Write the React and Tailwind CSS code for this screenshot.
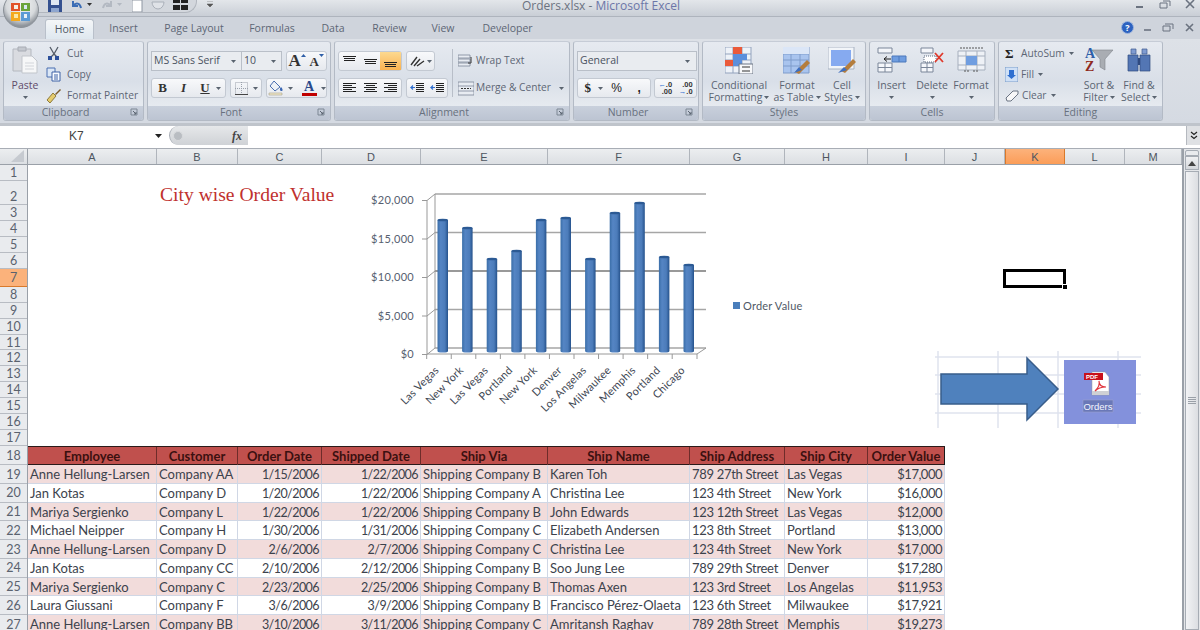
import React from "react";

const uiFont = "font-['Open_Sans','Noto_Sans',sans-serif]";

function Caret({ className = "" }) {
  return (
    <svg width="5" height="3" viewBox="0 0 5 3" className={`shrink-0 ${className}`}>
      <path d="M0 0h5L2.5 3z" fill="#5a6470" />
    </svg>
  );
}

function Launcher() {
  return (
    <svg width="9" height="9" viewBox="0 0 9 9" className="absolute right-[4px] top-[2px]">
      <path d="M1 1h6v6H1z" fill="none" stroke="#7d8794" />
      <path d="M3 3l3 3M6 4v2H4" fill="none" stroke="#5a6470" />
    </svg>
  );
}

function Group({ className, label, launcher, children }) {
  return (
    <div className={`${className} relative flex flex-col h-[80px] rounded-[3px] border border-[#b3bac5] border-t-[#c6ccd6] bg-gradient-to-b from-[#e6eaf0] via-[#d9dfe8] to-[#eef1f4] overflow-hidden`}>
      <div className="h-[65px] flex">{children}</div>
      <div className={`relative h-[14px] bg-gradient-to-b from-[#c9d0dc] to-[#bcc4d2] text-[10.5px] leading-[13px] text-center text-[#68717e] ${launcher ? "pr-[16px]" : ""}`}>
        {label}
        {launcher && <Launcher />}
      </div>
    </div>
  );
}

function BtnGroup({ className = "", children }) {
  return (
    <div className={`flex h-[20px] rounded-[3px] border border-[#c3c9d2] bg-gradient-to-b from-[#f8f9fb] to-[#e6e9ee] items-center ${className}`}>
      {children}
    </div>
  );
}

function Combo({ className, text }) {
  return (
    <div className={`flex h-[20px] items-center justify-between bg-[#e9ecf0] border border-[#b9bfc8] pl-[2px] pr-[5px] text-[10.5px] text-[#4a5260] ${className}`}>
      <span>{text}</span>
      <Caret />
    </div>
  );
}

function BigButton({ className, icon, line1, line2 }) {
  return (
    <div className={`flex flex-col items-center text-[10.5px] leading-[12px] text-[#5a6472] ${className}`}>
      <div className="h-[32px] mt-[2px] mb-[3px] flex items-center justify-center">{icon}</div>
      <span className="whitespace-nowrap">{line1}</span>
      <span className="whitespace-nowrap flex items-center gap-[2px] h-[12px]">
        {line2}
        <Caret />
      </span>
    </div>
  );
}

function Lines({ w = 13, rows }) {
  return (
    <svg width={w} height="12" viewBox="0 0 13 12">
      {rows.map((r, i) => (
        <path key={i} d={`M${r[0]} ${r[2]}H${r[1]}`} stroke="#222" strokeWidth="1" />
      ))}
    </svg>
  );
}

function Orb() {
  return (
    <svg width="38" height="34" viewBox="0 -4 38 34" className="absolute left-[1px] top-[-4px]">
      <defs>
        <radialGradient id="orb" cx="50%" cy="35%" r="60%">
          <stop offset="0" stopColor="#f7f8f8" />
          <stop offset="0.7" stopColor="#d6d9dc" />
          <stop offset="1" stopColor="#8f959c" />
        </radialGradient>
      </defs>
      <circle cx="20" cy="10" r="17.5" fill="url(#orb)" stroke="#8a9097" />
      <path d="M10 3h9v8h-9z" fill="#e2542a" />
      <path d="M13 5h4v4h-4z" fill="#f6f1e4" />
      <path d="M20 3h9v8h-9z" fill="#6ba53a" />
      <path d="M23 5h3v4h-3z" fill="#d7e9f3" />
      <path d="M10 12h9v9h-9z" fill="#f4a91f" />
      <path d="M13 14h4v4h-4z" fill="#fbe7a6" />
      <path d="M20 12h9v9h-9z" fill="#5b9bd5" />
      <path d="M23 14h3v4h-3z" fill="#e9f1f6" />
    </svg>
  );
}

function TitleBar() {
  return (
    <div className="relative h-[17px] flex items-start bg-gradient-to-b from-[#e3e6ea] to-[#c9ced6] border-b border-[#aeb4bd] overflow-hidden">
      <div className="flex items-center ml-[30px] pl-[18px] w-[167px] h-[13px] rounded-br-[12px] border-b border-r border-[#b1b6be] bg-[#d3d7dd] overflow-hidden gap-[8px]">
        <svg width="14" height="12" viewBox="0 0 14 12" className="shrink-0">
          <path d="M0 0h14v12H0z" fill="#34508f" />
          <path d="M3 0h8v5H3z" fill="#dfe7f2" />
          <path d="M3 8h8v4H3z" fill="#8ea6cf" />
        </svg>
        <svg width="22" height="12" viewBox="0 0 22 12" className="shrink-0">
          <path d="M3 1v5h5M3 6c3-4 7-3 8 2" fill="none" stroke="#3a6cb5" strokeWidth="2" />
          <path d="M17 3h5l-2.5 3z" fill="#333" />
        </svg>
        <svg width="22" height="12" viewBox="0 0 22 12" className="shrink-0">
          <path d="M11 1v5H6M11 6C8 2 4 3 3 8" fill="none" stroke="#b3b9c2" strokeWidth="2" />
          <path d="M17 3h5l-2.5 3z" fill="#b3b9c2" />
        </svg>
        <svg width="11" height="12" viewBox="0 0 11 12" className="shrink-0 ml-[2px]">
          <path d="M0 0h10v12H0z" fill="#fff" stroke="#8e96a2" />
        </svg>
        <svg width="14" height="12" viewBox="0 0 14 12" className="shrink-0">
          <path d="M1 2a6 7 0 0 0 12 0z" fill="#dfe2e7" stroke="#aab0b9" />
        </svg>
        <svg width="15" height="12" viewBox="0 0 15 12" className="shrink-0">
          <path d="M0 0h7v3H0zM8 0h7v3H8zM0 5h7v5H0zM8 5h7v5H8z" fill="#222" />
        </svg>
      </div>
      <svg width="6" height="6" viewBox="0 0 6 6" className="ml-[10px] mt-[1px]">
        <path d="M0 0h6M0 3h6L3 6z" fill="#555" stroke="#555" strokeWidth="0.5" />
      </svg>
      <div className="absolute left-[522px] top-0 text-[12px] leading-[11px] whitespace-nowrap">
        <span className="text-[#6b7280]">Orders.xlsx - </span>
        <span className="text-[#6c76a8]">Microsoft Excel</span>
      </div>
      <div className="absolute right-[4px] top-0 flex items-center gap-[13px] text-[#6b7380]">
        <svg width="12" height="10" viewBox="0 0 12 10"><path d="M2 7h7" stroke="#6b7380" strokeWidth="2" /></svg>
        <svg width="12" height="10" viewBox="0 0 12 10"><path d="M1 3h7v5H1zM4 1h7v5" fill="none" stroke="#6b7380" /></svg>
        <svg width="12" height="10" viewBox="0 0 12 10"><path d="M2 0l8 8M10 0L2 8" stroke="#6b7380" strokeWidth="1.6" /></svg>
      </div>
    </div>
  );
}

function Tabs() {
  const tabs = [
    ["Insert", "w-[55px]"],
    ["Page Layout", "w-[86px]"],
    ["Formulas", "w-[70px]"],
    ["Data", "w-[52px]"],
    ["Review", "w-[61px]"],
    ["View", "w-[46px]"],
    ["Developer", "w-[83px]"],
  ];
  return (
    <div className="flex h-[22px] bg-[#cfd4dc] text-[10.5px] text-[#5d6675] items-start">
      <div className="mt-[2px] ml-[45px] mr-[2px] w-[49px] h-[20px] rounded-t-[3px] border border-b-0 border-[#b9c0ca] bg-gradient-to-b from-[#f4f6f8] to-[#dfe8ef] text-center leading-[19px] text-[#4f5866]">
        Home
      </div>
      {tabs.map(([t, w]) => (
        <div key={t} className={`${w} h-[22px] text-center leading-[23px]`}>{t}</div>
      ))}
      <div className="ml-auto mr-[4px] flex items-center gap-[8px] h-[21px]">
        <div className="w-[13px] h-[13px] rounded-full bg-[#2d62c0] border border-[#9fb6dd] text-white text-[9px] font-bold leading-[12px] text-center">?</div>
        <svg width="12" height="10" viewBox="0 0 12 10"><path d="M2 7h7" stroke="#6b7380" strokeWidth="1.6" /></svg>
        <svg width="12" height="10" viewBox="0 0 12 10"><path d="M1 3h7v5H1zM3 1h8v5" fill="none" stroke="#6b7380" /></svg>
        <svg width="12" height="10" viewBox="0 0 12 10" className="ml-[2px]"><path d="M2 1l7 7M9 1L2 8" stroke="#6b7380" strokeWidth="1.6" /></svg>
      </div>
    </div>
  );
}

function Clipboard() {
  return (
    <Group className="w-[141px]" label="Clipboard" launcher>
      <div className="w-[42px] flex flex-col items-center pt-[4px] text-[10.5px] text-[#5f4b6a] leading-[12px]">
        <svg width="26" height="28" viewBox="0 0 26 28">
          <path d="M1 3h18v22H1z" fill="#d9dbe0" stroke="#b4b8bf" />
          <path d="M6 1h8v4H6z" fill="#c4c8cf" stroke="#a8acb4" />
          <path d="M10 10h10l5 5v12H10z" fill="#f6f7f8" stroke="#c1c5cb" />
          <path d="M13 17h9M13 20h9M13 23h9" stroke="#d2d5da" />
        </svg>
        <span className="mt-[5px]">Paste</span>
        <Caret className="mt-[5px]" />
      </div>
      <div className="flex flex-col pt-[1px] text-[10.2px] leading-[21px] text-[#5d6675]">
        {[
          ["Cut", <path key="c" d="M4 1l4 7 4-7M8 8l-3 3M8 8l3 3" fill="none" stroke="#555c68" strokeWidth="1.3" />, <path key="d" d="M2 10h4v4H2zM9 10h4v4H9z" fill="#2c4f9a" />],
          ["Copy", <path key="c" d="M1 1h8v9H1z" fill="#dbe7f6" stroke="#4b6fb0" />, <path key="d" d="M6 5h8v9H6zM8 8h4M8 10h4M8 12h4" fill="#f8fbff" stroke="#3e62a6" />],
          ["Format Painter", <path key="c" d="M9 6l5-5 1 1-5 5z" fill="#7a5a2b" />, <path key="d" d="M1 12l6-7 3 3-6 7z" fill="#e5cb6d" stroke="#8d7a3c" />],
        ].map(([t, a, b]) => (
          <div key={t} className="flex items-center gap-[5px] h-[21px]">
            <svg width="16" height="16" viewBox="0 0 16 16">{a}{b}</svg>
            <span>{t}</span>
          </div>
        ))}
      </div>
    </Group>
  );
}

function FontGroup() {
  return (
    <Group className="w-[184px]" label="Font" launcher>
      <div className="flex flex-col gap-[7px] pt-[9px] pl-[3px] text-[#333]">
        <div className="flex">
          <Combo className="w-[91px]" text="MS Sans Serif" />
          <Combo className="w-[40px] border-l-0" text="10" />
          <BtnGroup className="ml-[4px] w-[41px] font-['Liberation_Serif',serif] font-bold">
            <span className="w-[21px] flex items-start justify-center">
              <span className="text-[17px] leading-[18px]">A</span>
              <svg width="5" height="3" viewBox="0 0 5 3" className="mt-[2px]"><path d="M0 3h5L2.5 0z" fill="#2f5fa8" /></svg>
            </span>
            <span className="w-[19px] flex items-start justify-center">
              <span className="text-[13px] leading-[19px]">A</span>
              <svg width="5" height="3" viewBox="0 0 5 3" className="mt-[2px]"><path d="M0 0h5L2.5 3z" fill="#2f5fa8" /></svg>
            </span>
          </BtnGroup>
        </div>
        <div className="flex">
          <BtnGroup className="w-[75px] font-['Liberation_Serif',serif] text-[13px]">
            <span className="w-[21px] text-center font-bold">B</span>
            <span className="w-[21px] text-center italic font-bold">I</span>
            <span className="w-[22px] text-center font-bold underline">U</span>
            <Caret />
          </BtnGroup>
          <BtnGroup className="ml-[4px] w-[32px] justify-center gap-[5px]">
            <svg width="13" height="13" viewBox="0 0 13 13">
              <path d="M.5.5h12v12H.5zM6.5 0v13M0 6.5h13" fill="none" stroke="#9aa1ab" strokeDasharray="1 1" />
              <path d="M0 12.5h13" stroke="#444" />
            </svg>
            <Caret />
          </BtnGroup>
          <BtnGroup className="ml-[4px] w-[61px] justify-center gap-[4px]">
            <svg width="16" height="16" viewBox="0 0 16 16">
              <path d="M6 1l6 6-5 4-5-5z" fill="#eef2f7" stroke="#4b6fb0" />
              <path d="M13 7c2 2 2 4 .5 4S11 9 13 7z" fill="#3c68b4" />
              <path d="M1 13h13v2H1z" fill="#f1e9c9" stroke="#a9a28a" strokeWidth=".6" />
            </svg>
            <Caret />
            <span className="flex flex-col items-center w-[15px] ml-[5px] font-['Liberation_Serif',serif] font-bold text-[14px] leading-[12px] text-[#2a4a8c]">
              A<span className="w-[15px] h-[3px] bg-[#c00000]" />
            </span>
            <Caret />
          </BtnGroup>
        </div>
      </div>
    </Group>
  );
}

function AlignGroup() {
  const bar = "w-[21px] flex justify-center items-center h-[18px]";
  return (
    <Group className="w-[236px]" label="Alignment" launcher>
      <div className="flex flex-col gap-[7px] pt-[9px] pl-[3px]">
        <div className="flex">
          <BtnGroup className="w-[64px]">
            <span className={bar}><Lines rows={[[0, 13, 1.5], [1, 12, 3.5], [1, 12, 5.5]]} /></span>
            <span className={bar}><Lines rows={[[0, 13, 4.5], [1, 12, 6.5], [1, 12, 8.5]]} /></span>
            <span className={`${bar} bg-gradient-to-b from-[#fcd990] to-[#f9b24f]`}><Lines rows={[[0, 13, 7.5], [1, 12, 9.5], [1, 12, 11.5]]} /></span>
          </BtnGroup>
          <BtnGroup className="ml-[4px] w-[29px] justify-center gap-[2px]">
            <svg width="15" height="12" viewBox="0 0 15 12"><path d="M1 10L7 2M4 11l6-7M7 11l7-5" stroke="#333" strokeWidth="1.4" /></svg>
            <Caret />
          </BtnGroup>
        </div>
        <div className="flex">
          <BtnGroup className="w-[64px]">
            <span className={bar}><Lines rows={[[0, 13, 1.5], [0, 9, 3.5], [0, 13, 5.5], [0, 9, 7.5], [0, 13, 9.5]]} /></span>
            <span className={bar}><Lines rows={[[0, 13, 1.5], [2, 11, 3.5], [0, 13, 5.5], [2, 11, 7.5], [0, 13, 9.5]]} /></span>
            <span className={bar}><Lines rows={[[0, 13, 1.5], [4, 13, 3.5], [0, 13, 5.5], [4, 13, 7.5], [0, 13, 9.5]]} /></span>
          </BtnGroup>
          <BtnGroup className="ml-[4px] w-[42px]">
            {[0, 1].map((i) => (
              <span key={i} className="w-[20px] flex justify-center">
                <svg width="15" height="12" viewBox="0 0 15 12">
                  <path d="M6 1.5h8M6 3.5h8M6 5.5h8M6 7.5h8M6 9.5h8" stroke="#222" />
                  <path d="M5 5.5H1l2-2M1 5.5l2 2" fill="none" stroke="#2f6fd0" strokeWidth="1.2" />
                </svg>
              </span>
            ))}
          </BtnGroup>
        </div>
      </div>
      <div className="w-px h-[48px] mt-[7px] ml-[4px] bg-[#b8bec8]" />
      <div className="flex flex-col gap-[7px] pt-[9px] pl-[5px] text-[10.2px] text-[#5d6675]">
        <div className="flex items-center gap-[2px] h-[20px]">
          <svg width="16" height="15" viewBox="0 0 16 15">
            <path d="M0 1h12v3H0zM0 5h12v3H0zM0 9h12v3H0z" fill="#e8ecf2" stroke="#7b8698" strokeWidth=".8" />
            <path d="M13 3v6h-3" fill="none" stroke="#333" />
          </svg>
          <span>Wrap Text</span>
        </div>
        <div className="flex items-center gap-[2px] h-[20px]">
          <svg width="16" height="15" viewBox="0 0 16 15">
            <path d="M0 1h16v13H0z" fill="#e8ecf2" stroke="#7b8698" strokeWidth=".8" />
            <path d="M0 5h16M0 10h16" stroke="#7b8698" strokeWidth=".8" />
            <path d="M3 7.5h10" stroke="#333" strokeDasharray="2 1" />
          </svg>
          <span>Merge &amp; Center</span>
          <Caret className="ml-[6px]" />
        </div>
      </div>
    </Group>
  );
}

function NumberGroup() {
  return (
    <Group className="w-[126px]" label="Number" launcher>
      <div className="flex flex-col gap-[7px] pt-[9px] pl-[3px]">
        <Combo className="w-[120px] pr-[6px]" text="General" />
        <div className="flex">
          <BtnGroup className="w-[74px] text-[#222] font-['Liberation_Sans',sans-serif]">
            <span className="w-[20px] text-center font-['Liberation_Serif',serif] font-bold text-[13px]">$</span>
            <Caret />
            <span className="w-[24px] ml-[2px] text-center text-[12px]">%</span>
            <span className="w-[22px] text-center font-bold text-[12px]">,</span>
          </BtnGroup>
          <BtnGroup className="ml-[3px] w-[43px] justify-around text-[7.5px] leading-[7px] font-bold font-['Liberation_Sans',sans-serif] text-[#333]">
            <span className="flex flex-col items-end"><span><span className="text-[#2f6fd0]">←</span>.0</span><span>.00</span></span>
            <span className="flex flex-col items-end"><span>.00</span><span><span className="text-[#2f6fd0]">→</span>.0</span></span>
          </BtnGroup>
        </div>
      </div>
    </Group>
  );
}

function StyleIcon({ kind }) {
  const grid = "M0 0h26v26H0z M0 7h26 M0 13h26 M0 19h26 M8 0v26 M17 0v26";
  if (kind === "cond") {
    return (
      <svg width="28" height="27" viewBox="0 0 28 27">
        <path d={grid} fill="#eef2f8" stroke="#93a3bd" />
        <path d="M8 0h9v7H8zM0 13h8v6H0zM8 7h9v6H8z" fill="#ea5a3a" />
        <path d="M8 7h14v6H8zM8 13h9v6H8z" fill="#5b8fdc" />
        <path d="M14 17h14v10H14z" fill="#f7f8fa" stroke="#6c7686" />
        <path d="M17 20h8M17 24h8" stroke="#333" />
      </svg>
    );
  }
  if (kind === "table") {
    return (
      <svg width="28" height="27" viewBox="0 0 28 27">
        <path d={grid} fill="#a9c4ee" stroke="#7f9ccb" />
        <path d="M0 0h26v7H0z" fill="#dbe6f7" />
        <path d="M12 25l12-12 3 3-11 11z" fill="#b47d3d" />
        <path d="M11 26l5-6 3 3z" fill="#3e6fc0" />
      </svg>
    );
  }
  return (
    <svg width="28" height="27" viewBox="0 0 28 27">
      <path d="M0 0h26v22H0z" fill="#f2f5f9" stroke="#a8b2c2" />
      <path d="M3 3h20v16H3z" fill="#86aaf0" />
      <path d="M13 24l12-12 3 3-11 11z" fill="#b47d3d" />
      <path d="M10 26l6-6 3 3z" fill="#3e6fc0" />
    </svg>
  );
}

function StylesGroup() {
  return (
    <Group className="w-[164px]" label="Styles">
      <BigButton className="w-[72px]" icon={<StyleIcon kind="cond" />} line1="Conditional" line2="Formatting" />
      <BigButton className="w-[44px]" icon={<StyleIcon kind="table" />} line1="Format" line2="as Table" />
      <BigButton className="w-[46px]" icon={<StyleIcon kind="cell" />} line1="Cell" line2="Styles" />
    </Group>
  );
}

function CellBtn({ className, icon, label }) {
  return (
    <div className={`flex flex-col items-center text-[10.5px] leading-[12px] text-[#5a6472] ${className}`}>
      <div className="h-[32px] mt-[2px] mb-[3px] flex items-center">{icon}</div>
      <span>{label}</span>
      <Caret className="mt-[5px]" />
    </div>
  );
}

function CellsGroup() {
  return (
    <Group className="w-[126px]" label="Cells">
      <CellBtn
        className="w-[43px]"
        label="Insert"
        icon={
          <svg width="30" height="26" viewBox="0 0 30 26">
            <path d="M1 1h14v5H1zM1 16h14v9H1zM1 20.5h14M8 16v9" fill="#f4f6fa" stroke="#7a8699" />
            <path d="M15 9h14v6H15zM22 9v6" fill="#6f9de0" stroke="#4d79bb" />
            <path d="M14 12H7l3-2.5M7 12l3 2.5" fill="none" stroke="#222" />
          </svg>
        }
      />
      <CellBtn
        className="w-[38px]"
        label="Delete"
        icon={
          <svg width="24" height="26" viewBox="0 0 24 26">
            <path d="M1 1h12v5H1zM1 16h12v9H1zM1 20.5h12M7 16v9" fill="#f4f6fa" stroke="#7a8699" />
            <path d="M4 9h12v6H4z" fill="#fff" stroke="#5c6a80" strokeDasharray="1 1" />
            <path d="M15 6l8 9M23 6l-8 9" stroke="#e0392b" strokeWidth="1.8" />
          </svg>
        }
      />
      <CellBtn
        className="w-[40px]"
        label="Format"
        icon={
          <svg width="29" height="27" viewBox="0 0 29 27">
            <path d="M1 4h27v19H1zM9 4v19M20 4v19M1 9h27M1 18h27" fill="#eef1f6" stroke="#a6afbd" />
            <path d="M9 9h11v9H9z" fill="#6f9de0" />
            <path d="M3 1h23M7 24h6M16 24h6" stroke="#555" strokeDasharray="2 1" />
          </svg>
        }
      />
    </Group>
  );
}

function EditingGroup() {
  return (
    <Group className="w-[165px]" label="Editing">
      <div className="flex flex-col pt-[1px] pl-[6px] w-[81px] text-[10.2px] leading-[21px] text-[#5d6675]">
        <div className="flex items-center h-[21px] whitespace-nowrap">
          <span className="w-[16px] font-['Liberation_Serif',serif] font-bold text-[13px] text-[#222]">Σ</span>
          <span>AutoSum</span>
          <Caret className="ml-[4px]" />
        </div>
        <div className="flex items-center h-[21px]">
          <svg width="13" height="15" viewBox="0 0 13 15" className="mr-[3px]">
            <path d="M0 0h13v15H0z" fill="#cfe0f6" stroke="#7a9cc8" />
            <path d="M4 3h5v5h2l-4.5 4L2 8h2z" fill="#2f6fd0" />
          </svg>
          <span>Fill</span>
          <Caret className="ml-[4px]" />
        </div>
        <div className="flex items-center h-[21px]">
          <svg width="14" height="12" viewBox="0 0 14 12" className="mr-[3px]">
            <path d="M1 8l7-7h5v3l-7 7H2z" fill="#f7f7f8" stroke="#6b7483" />
          </svg>
          <span>Clear</span>
          <Caret className="ml-[4px]" />
        </div>
      </div>
      <BigButton
        className="w-[38px]"
        icon={
          <svg width="30" height="28" viewBox="0 0 30 28">
            <path d="M8 4h21l-8 9v11l-5-3v-8z" fill="#a9adb3" stroke="#7f848b" strokeWidth=".6" />
            <text x="1" y="12" fontFamily="Liberation Serif" fontWeight="700" fontSize="14" fill="#2f5fa8">A</text>
            <text x="1" y="25" fontFamily="Liberation Serif" fontWeight="700" fontSize="14" fill="#8f2a20">Z</text>
          </svg>
        }
        line1="Sort &"
        line2="Filter"
      />
      <BigButton
        className="w-[40px] ml-[1px]"
        icon={
          <svg width="26" height="24" viewBox="0 0 26 24">
            <path d="M5 1h5v5H5zM16 1h5v5h-5z" fill="#7f9bd0" stroke="#3f5a90" strokeWidth=".7" />
            <path d="M2 7h10v16H2zM14 7h10v16H14z" fill="#5376b4" stroke="#2f4a80" strokeWidth=".7" />
            <path d="M12 10h2v7h-2z" fill="#2f4a80" />
          </svg>
        }
        line1="Find &"
        line2="Select"
      />
    </Group>
  );
}

function Ribbon() {
  return (
    <div className={`h-[87px] flex gap-[3px] pl-[3px] pt-[2px] bg-gradient-to-b from-[#dde1e7] to-[#d5dae2] border-b-[3px] border-[#bfc4cb] ${uiFont}`}>
      <Clipboard />
      <FontGroup />
      <AlignGroup />
      <NumberGroup />
      <StylesGroup />
      <CellsGroup />
      <EditingGroup />
    </div>
  );
}

function FormulaBar() {
  return (
    <div className="h-[23px] flex bg-white border-b border-[#a8adb5] font-['Liberation_Sans',sans-serif] pb-[3px]">
      <div className="w-[169px] flex items-center relative text-[12px] text-[#444]">
        <span className="ml-[69px]">K7</span>
        <svg width="7" height="4" viewBox="0 0 7 4" className="ml-[71px]"><path d="M0 0h7L3.5 4z" fill="#222" /></svg>
      </div>
      <div className="w-[79px] flex items-center justify-between rounded-l-[10px] bg-gradient-to-b from-[#e6e8ea] to-[#cfd2d6] border-l border-[#a8adb5] pl-[3px] pr-[6px]">
        <span className="w-[10px] h-[10px] rounded-full bg-[#b9bdc2] border border-[#d8dadd]" />
        <span className="font-['Liberation_Serif',serif] italic font-bold text-[12px] text-[#444]">fx</span>
      </div>
      <div className="flex-1" />
      <div className="w-[14px] bg-[#dfe1e4] border-l border-[#b5b9bf] flex items-center justify-center">
        <svg width="8" height="9" viewBox="0 0 8 9"><path d="M1 1l3 2.5L7 1M1 5l3 2.5L7 5" fill="none" stroke="#222" strokeWidth="1.2" /></svg>
      </div>
    </div>
  );
}

const columns = [
  ["A", "w-[129px]"],
  ["B", "w-[81px]"],
  ["C", "w-[84px]"],
  ["D", "w-[99px]"],
  ["E", "w-[127px]"],
  ["F", "w-[142px]"],
  ["G", "w-[95px]"],
  ["H", "w-[83px]"],
  ["I", "w-[77px]"],
  ["J", "w-[60px]"],
  ["K", "w-[60px]"],
  ["L", "w-[60px]"],
  ["M", "w-[57px]"],
];

const rowHeights = [
  "h-[16px]", "h-[24px] pt-[8px]", "h-[16px]", "h-[16px]", "h-[16px]", "h-[16px]", "h-[18px]", "h-[16px]", "h-[16px]",
  "h-[16px]", "h-[15px]", "h-[16px]", "h-[16px]", "h-[16px]", "h-[16px]", "h-[16px]", "h-[16px]", "h-[19px]",
  "h-[18.75px]", "h-[18.75px]", "h-[18.75px]", "h-[18.75px]", "h-[18.75px]", "h-[18.75px]", "h-[18.75px]", "h-[18.75px]", "h-[18.75px]",
];

const headers = ["Employee", "Customer", "Order Date", "Shipped Date", "Ship Via", "Ship Name", "Ship Address", "Ship City", "Order Value"];

const orders = [
  ["Anne Hellung-Larsen", "Company AA", "1/15/2006", "1/22/2006", "Shipping Company B", "Karen Toh", "789 27th Street", "Las Vegas", "$17,000"],
  ["Jan Kotas", "Company D", "1/20/2006", "1/22/2006", "Shipping Company A", "Christina Lee", "123 4th Street", "New York", "$16,000"],
  ["Mariya Sergienko", "Company L", "1/22/2006", "1/22/2006", "Shipping Company B", "John Edwards", "123 12th Street", "Las Vegas", "$12,000"],
  ["Michael Neipper", "Company H", "1/30/2006", "1/31/2006", "Shipping Company C", "Elizabeth Andersen", "123 8th Street", "Portland", "$13,000"],
  ["Anne Hellung-Larsen", "Company D", "2/6/2006", "2/7/2006", "Shipping Company C", "Christina Lee", "123 4th Street", "New York", "$17,000"],
  ["Jan Kotas", "Company CC", "2/10/2006", "2/12/2006", "Shipping Company B", "Soo Jung Lee", "789 29th Street", "Denver", "$17,280"],
  ["Mariya Sergienko", "Company C", "2/23/2006", "2/25/2006", "Shipping Company B", "Thomas Axen", "123 3rd Street", "Los Angelas", "$11,953"],
  ["Laura Giussani", "Company F", "3/6/2006", "3/9/2006", "Shipping Company B", "Francisco Pérez-Olaeta", "123 6th Street", "Milwaukee", "$17,921"],
  ["Anne Hellung-Larsen", "Company BB", "3/10/2006", "3/11/2006", "Shipping Company C", "Amritansh Raghav", "789 28th Street", "Memphis", "$19,273"],
];

// numeric columns are narrower in the reference font
const cellStyle = [
  "text-left",
  "text-left",
  "text-right text-[12.5px] tracking-[-0.55px]",
  "text-right text-[12.5px] tracking-[-0.55px]",
  "text-left",
  "text-left",
  "text-left tracking-[-0.3px]",
  "text-left",
  "text-right tracking-[-0.5px]",
];

const bars = [
  ["Las Vegas", 220], ["New York", 228], ["Las Vegas", 259], ["Portland", 251], ["New York", 220], ["Denver", 218],
  ["Los Angelas", 259], ["Milwaukee", 213], ["Memphis", 203], ["Portland", 257], ["Chicago", 265],
];

function Chart() {
  const grid = [194, 232.5, 271, 309.5, 348];
  const yLabels = ["$20,000", "$15,000", "$10,000", "$5,000", "$0"];
  return (
    <svg width="450" height="235" viewBox="365 185 450 235" className="absolute left-[338px] top-[20px]" fontFamily="Lato, sans-serif">
      <defs>
        <linearGradient id="bar" x1="0" x2="1" y1="0" y2="0">
          <stop offset="0" stopColor="#3a6ea8" />
          <stop offset="0.3" stopColor="#5585c4" />
          <stop offset="0.7" stopColor="#4c7cba" />
          <stop offset="1" stopColor="#25528c" />
        </linearGradient>
      </defs>
      {grid.map((y, i) => (
        <g key={y}>
          <path d={`M434 ${y}H705`} stroke={i === 2 ? "#777" : "#a6a6a6"} strokeWidth="1.6" />
          <path d={`M434 ${y}L426 ${y + 6.5}H421`} fill="none" stroke="#999" />
          <text x="413" y={y + 10} textAnchor="end" fontSize="11" fill="#566070" letterSpacing=".3">{yLabels[i]}</text>
        </g>
      ))}
      <path d="M434 194V348M426 200.5V354H696L705 348" fill="none" stroke="#999" />
      {bars.map(([name, top], i) => {
        const x = 436.5 + i * 24.6;
        const tick = 425.7 + i * 24.55;
        return (
          <g key={i}>
            <path d={`M${tick} 354v5`} stroke="#999" />
            <path d={`M${x} ${top}V351a5 1.5 0 0 0 10.5 0V${top}z`} fill="url(#bar)" />
            <ellipse cx={x + 5.25} cy={top} rx="5.25" ry="1.3" fill="#2c5a94" />
            <text transform={`translate(${x + 2} 371) rotate(-45)`} textAnchor="end" fontSize="11" fill="#3f4854" letterSpacing=".2">{name}</text>
          </g>
        );
      })}
      <path d="M696 354v5" stroke="#999" />
      <path d="M732 302h7v7h-7z" fill="#4a7ebb" />
      <text x="742" y="309.5" fontSize="11" fill="#4f5966" letterSpacing=".2">Order Value</text>
    </svg>
  );
}

function PdfArrow() {
  return (
    <svg width="215" height="84" viewBox="930 348 215 84" className="absolute left-[903px] top-[183px]" fontFamily="Liberation Sans, sans-serif">
      <path d="M937 351v77M997 351v77M1057 351v77M1117 351v77M934 357H1140M934 375H1140M934 394H1140M934 413H1140" stroke="#dfe3ee" strokeWidth="1.5" />
      <path d="M940 374h86v-16l31 31-31 31v-16h-86z" fill="#4f81bd" stroke="#385d8a" strokeWidth="1.5" />
      <path d="M1063 360h72v64h-72z" fill="#8391dc" />
      <path d="M1091 372h13l4 5v18h-17z" fill="#fff" stroke="#999" strokeWidth=".5" />
      <path d="M1091 391h17v4h-17z" fill="#cfd0d4" />
      <path d="M1083 373h19v7h-19z" fill="#c8101a" />
      <text x="1085" y="379" fontSize="6" fontWeight="700" fill="#fff">PDF</text>
      <path d="M1094 391c3-3 5-7 4-10 0 4 3 6 7 6-4 0-8 1-11 4z" fill="none" stroke="#e0343c" strokeWidth="1.2" />
      <path d="M1082 400h30v12h-30z" fill="#6a78b8" stroke="#9aa1cc" strokeWidth=".6" />
      <text x="1097" y="409.5" textAnchor="middle" fontSize="9.5" fill="#f4f6ff">Orders</text>
    </svg>
  );
}

function Sheet() {
  return (
    <div className="flex flex-1 min-h-0 bg-white font-['Lato',sans-serif]">
      <div className="flex-1 min-w-0 flex flex-col">
        <div className="flex h-[16px] bg-gradient-to-b from-[#eceef0] to-[#dcdfe3] border-b border-[#9aa0a8] font-['Liberation_Sans',sans-serif] text-[11px] text-[#4d5560]">
          <div className="w-[28px] border-r border-[#9aa0a8] flex items-end justify-end">
            <svg width="14" height="12" viewBox="0 0 14 12" className="mb-[2px] mr-[2px]"><path d="M13 0v12H0z" fill="#c6cad0" /></svg>
          </div>
          {columns.map(([c, w]) => (
            <div
              key={c}
              className={`${w} text-center leading-[16px] border-r ${c === "K" ? "bg-gradient-to-b from-[#fcb27b] to-[#fb9d58] border-[#d9792b] border-l" : "border-[#b0b5bc]"}`}
            >
              {c}
            </div>
          ))}
        </div>
        <div className="flex flex-1 min-h-0 overflow-hidden">
          <div className="w-[28px] shrink-0 flex flex-col border-r border-[#9aa0a8] text-[12.5px] text-[#5a626e]">
            {rowHeights.map((h, i) => (
              <div
                key={i}
                className={`${h} shrink-0 flex items-center justify-center border-b ${i === 6 ? "bg-[#fbb27b] border-[#d9792b]" : "bg-[#e9ebee] border-[#b8bcc3]"}`}
              >
                <span className="relative top-[1px]">{i + 1}</span>
              </div>
            ))}
          </div>
          <div className="relative flex-1">
            <div className="h-[281px]" />
            <div className="absolute left-[132px] top-[18px] font-['Liberation_Serif',serif] text-[19.6px] leading-[24px] text-[#c0312e] whitespace-nowrap">
              City wise Order Value
            </div>
            <Chart />
            <PdfArrow />
            <div className="absolute left-[975px] top-[104px] w-[63px] h-[19px] border-[3px] border-black">
              <div className="absolute right-[-5px] bottom-[-5px] w-[6px] h-[6px] bg-black border border-white" />
            </div>
            <div className="w-[917px]">
              <div className="grid grid-cols-[129px_81px_84px_99px_127px_142px_95px_83px_77px] h-[19px] bg-[#c0504d] border-y border-[#2a1a1a] text-[13px] leading-[18px] font-bold text-[#3b1010] text-center">
                {headers.map((h, i) => (
                  <div key={h} className={`whitespace-nowrap border-r ${i === 8 ? "border-[#1a1a1a]" : "border-[#6e2c2a]"}`}>{h}</div>
                ))}
              </div>
              {orders.map((row, r) => (
                <div
                  key={r}
                  className={`grid grid-cols-[129px_81px_84px_99px_127px_142px_95px_83px_77px] h-[18.75px] text-[13px] leading-[19px] text-[#3c424c] border-b border-[#d0d7e5] ${r % 2 === 0 ? "bg-[#f2dcdb]" : "bg-white"}`}
                >
                  {row.map((c, i) => (
                    <div
                      key={i}
                      className={`whitespace-nowrap overflow-hidden px-[2px] border-r border-[#d0d7e5] ${cellStyle[i]}`}
                    >
                      {c}
                    </div>
                  ))}
                </div>
              ))}
            </div>
          </div>
        </div>
      </div>
      <div className="w-[18px] shrink-0 flex flex-col items-center bg-[#e4e6e9] border-l-2 border-[#9aa0a8] pt-[1px]">
        <div className="w-[14px] h-[6px] rounded-t-[2px] bg-[#e9ebee] border border-[#a6acb4]" />
        <div className="w-[14px] h-[14px] flex items-center justify-center bg-gradient-to-b from-[#f0f1f3] to-[#d4d7db] border border-[#a6acb4]">
          <svg width="8" height="5" viewBox="0 0 8 5"><path d="M4 0l4 5H0z" fill="#444" /></svg>
        </div>
        <div className="flex-1 w-[14px] mt-[1px] flex items-center justify-center bg-gradient-to-r from-[#f2f3f5] to-[#dcdee2] border border-[#a6acb4]">
          <svg width="8" height="7" viewBox="0 0 8 7"><path d="M0 .5h8M0 2.5h8M0 4.5h8M0 6.5h8" stroke="#9aa0a8" /></svg>
        </div>
      </div>
    </div>
  );
}

export default function App() {
  return (
    <div className={`relative w-[1200px] h-[630px] overflow-hidden flex flex-col bg-white ${uiFont}`}>
      <TitleBar />
      <Tabs />
      <Ribbon />
      <FormulaBar />
      <Sheet />
      <Orb />
    </div>
  );
}
